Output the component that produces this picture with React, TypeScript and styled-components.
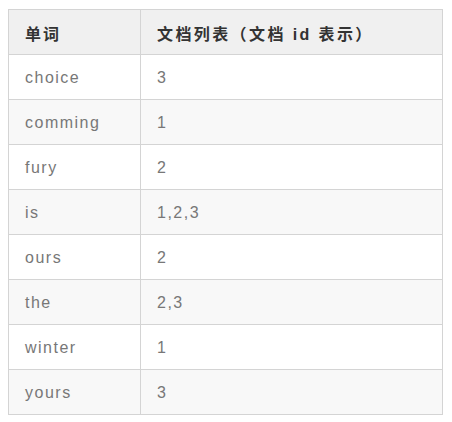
import React from "react";
import styled, { createGlobalStyle } from "styled-components";

const Global = createGlobalStyle`
  html, body { margin: 0; padding: 0; background: #fff; }
  body { padding: 9px 10px 0 8px; }
`;

const Table = styled.table`
  width: 435px;
  border-collapse: collapse;
  font-family: "Liberation Sans", "Noto Sans CJK SC", sans-serif;
  font-size: 16px;
  border: 1px solid #d4d4d4;
`;

const HeadCell = styled.th`
  background: #f0f0f0;
  color: #333;
  font-weight: bold;
  text-align: left;
  letter-spacing: 2.4px;
  height: 43px;
  padding: 1px 0 0 16px;
  border: 1px solid #d4d4d4;
  &:first-child { width: 115px; letter-spacing: 2px; }
`;

const Row = styled.tr<{ $alt: boolean }>`
  background: ${(p) => (p.$alt ? "#f8f8f8" : "#fff")};
`;

const Cell = styled.td`
  color: #777;
  letter-spacing: 1.5px;
  height: 42px;
  padding: 2px 0 0 16px;
  border: 1px solid #d4d4d4;
  vertical-align: middle;
`;

const rows: [string, string][] = [
  ["choice", "3"],
  ["comming", "1"],
  ["fury", "2"],
  ["is", "1,2,3"],
  ["ours", "2"],
  ["the", "2,3"],
  ["winter", "1"],
  ["yours", "3"],
];

export default function App() {
  return (
    <>
      <Global />
      <Table>
        <thead>
          <tr>
            <HeadCell>单词</HeadCell>
            <HeadCell>文档列表（文档 id 表示）</HeadCell>
          </tr>
        </thead>
        <tbody>
          {rows.map(([w, d], i) => (
            <Row key={w} $alt={i % 2 === 1}>
              <Cell>{w}</Cell>
              <Cell>{d}</Cell>
            </Row>
          ))}
        </tbody>
      </Table>
    </>
  );
}
